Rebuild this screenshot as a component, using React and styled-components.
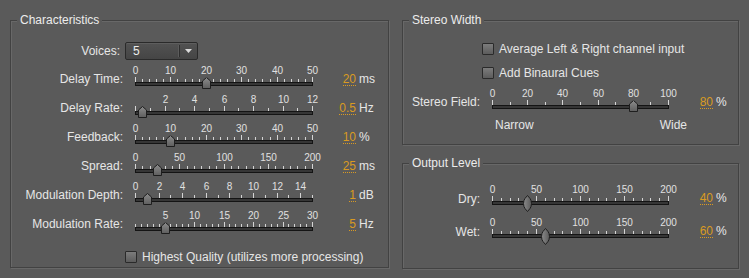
import React from "react";
import styled, { createGlobalStyle } from "styled-components";

const ORANGE = "#d99a22";
const BG = "#5a5a5a";

const GlobalStyle = createGlobalStyle`
  html, body {
    margin: 0;
    background: ${BG};
  }
  body {
    font-family: "Liberation Sans", Arial, sans-serif;
    color: #e6e6e6;
  }
`;

const characteristics = [
	{ label: "Delay Time:", min: 0, max: 50, value: 20, shown: "20", unit: "ms", minor: 2, major: 10, labels: [0, 10, 20, 30, 40, 50] },
	{ label: "Delay Rate:", min: 0, max: 12, value: 0.5, shown: "0.5", unit: "Hz", minor: 1, major: 2, labels: [2, 4, 6, 8, 10, 12] },
	{ label: "Feedback:", min: 0, max: 50, value: 10, shown: "10", unit: "%", minor: 2, major: 10, labels: [0, 10, 20, 30, 40, 50] },
	{ label: "Spread:", min: 0, max: 200, value: 25, shown: "25", unit: "ms", minor: 200 / 24, major: 50, labels: [0, 50, 100, 150, 200] },
	{ label: "Modulation Depth:", min: 0, max: 15, value: 1, shown: "1", unit: "dB", minor: 1, major: 2, labels: [0, 2, 4, 6, 8, 10, 12, 14] },
	{ label: "Modulation Rate:", min: 0, max: 30, value: 5, shown: "5", unit: "Hz", minor: 1, major: 5, labels: [5, 10, 15, 20, 25, 30], zeroMinor: true },
];

const output = [
	{ label: "Dry:", value: 40, gap: 15 },
	{ label: "Wet:", value: 60, gap: 11 },
];

function Slider({ min, max, value, minor, major, labels, width, lozenge, zeroMinor }) {
	const pos = (v) => Math.round(((v - min) / (max - min)) * (width - 1));
	const count = Math.round((max - min) / minor);
	const ticks = [];
	for (let i = 0; i <= count; i++) {
		const v = min + i * minor;
		let isMajor = Math.abs(v / major - Math.round(v / major)) < 1e-6;
		if (v === 0 && zeroMinor) isMajor = false;
		ticks.push({ x: pos(v) + 0.5, isMajor });
	}

	return (
		<SliderBox $w={width}>
			<Scale>
				{labels.map((l) => (
					<ScaleNum key={l} style={{ left: pos(l) }}>
						{l}
					</ScaleNum>
				))}
			</Scale>
			<svg width={width} height="6" style={{ display: "block" }}>
				{ticks.map((t, i) => (
					<line key={i} x1={t.x} x2={t.x} y1={t.isMajor ? 1 : 3} y2={6} stroke="#d4d4d4" strokeWidth="1" />
				))}
			</svg>
			<Track />
			{lozenge ? (
				<Thumb style={{ left: pos(value) - 4, top: 10 }} width="9" height="17" viewBox="0 0 9 17">
					<defs>
						<linearGradient id="lz" x1="0" x2="1" y1="0" y2="0">
							<stop offset="0" stopColor="#8a8a8a" />
							<stop offset="1" stopColor="#5a5a5a" />
						</linearGradient>
					</defs>
					<path d="M4.5 0.5 C6 2.5 8.5 4 8.5 8.5 C8.5 13 6 14.5 4.5 16.5 C3 14.5 0.5 13 0.5 8.5 C0.5 4 3 2.5 4.5 0.5Z" fill="url(#lz)" stroke="#1e1e1e" />
				</Thumb>
			) : (
				<Thumb style={{ left: pos(value) - 4, top: 11 }} width="9" height="12" viewBox="0 0 9 12">
					<defs>
						<linearGradient id="hs" x1="0" x2="0" y1="0" y2="1">
							<stop offset="0" stopColor="#8c8c8c" />
							<stop offset="1" stopColor="#5e5e5e" />
						</linearGradient>
					</defs>
					<path d="M0.5 11.5 V4 L4.5 0.5 L8.5 4 V11.5 Z" fill="url(#hs)" stroke="#1e1e1e" />
				</Thumb>
			)}
		</SliderBox>
	);
}

function Value({ shown, unit }) {
	return (
		<>
			<ValueCell>
				<Num>{shown}</Num>
			</ValueCell>
			<Unit>{unit}</Unit>
		</>
	);
}

export default function App() {
	return (
		<Page>
			<GlobalStyle />
			<Group $w={379} $h={248}>
				<Title>Characteristics</Title>
				<VoicesRow>
					<Label $pad={0}>Voices:</Label>
					<Select>
						<span>5</span>
						<SelectArrow>
							<svg width="7" height="4" viewBox="0 0 7 4">
								<path d="M0 0 H7 L3.5 4 Z" fill="#dcdcdc" />
							</svg>
						</SelectArrow>
					</Select>
				</VoicesRow>
				{characteristics.map((s, i) => (
					<SliderRow key={s.label} $label={124} $track={178} $value={43} $gap={i === 0 ? 6 : 7}>
						<Label>{s.label}</Label>
						<Slider {...s} width={178} />
						<Value shown={s.shown} unit={s.unit} />
					</SliderRow>
				))}
				<CheckRow $indent={114} $gap={18}>
					<Box />
					<span>Highest Quality (utilizes more processing)</span>
				</CheckRow>
			</Group>

			<Column>
				<Group $w={337} $h={125}>
					<Title>Stereo Width</Title>
					<CheckRow $indent={79} $gap={16}>
						<Box />
						<span>Average Left &amp; Right channel input</span>
					</CheckRow>
					<CheckRow $indent={79} $gap={12}>
						<Box />
						<span>Add Binaural Cues</span>
					</CheckRow>
					<SliderRow $label={89} $track={177} $value={44} $gap={10}>
						<Label>Stereo Field:</Label>
						<Slider min={0} max={100} value={80} minor={10} major={20} labels={[0, 20, 40, 60, 80, 100]} width={177} />
						<Value shown="80" unit="%" />
					</SliderRow>
					<Ends>
						<span>Narrow</span>
						<span>Wide</span>
					</Ends>
				</Group>

				<Group $w={337} $h={106}>
					<Title>Output Level</Title>
					{output.map((o) => (
						<SliderRow key={o.label} $label={89} $track={177} $value={44} $gap={o.gap}>
							<Label $top={7}>{o.label}</Label>
							<Slider min={0} max={200} value={o.value} minor={10} major={50} labels={[0, 50, 100, 150, 200]} width={177} lozenge />
							<Value shown={String(o.value)} unit="%" />
						</SliderRow>
					))}
				</Group>
			</Column>
		</Page>
	);
}

const Page = styled.div`
	display: flex;
	align-items: flex-start;
	gap: 13px;
	padding: 20px 0 0 10px;
	height: 278px;
	box-sizing: border-box;
	overflow: hidden;
`;

const Column = styled.div`
	display: flex;
	flex-direction: column;
	gap: 18px;
`;

const Group = styled.section`
	box-sizing: border-box;
	width: ${(p) => p.$w}px;
	height: ${(p) => p.$h}px;
	border: 1px solid #424242;
	box-shadow: inset 1px 1px 0 #686868, 1px 1px 0 #686868;
`;

const Title = styled.h3`
	width: fit-content;
	margin: -8px 0 0 6px;
	padding: 0 3px;
	background: ${BG};
	font-size: 12px;
	font-weight: normal;
	line-height: 14px;
	color: #ececec;
`;

const Label = styled.div`
	text-align: right;
	padding-right: ${(p) => (p.$pad === undefined ? 12 : p.$pad)}px;
	padding-top: ${(p) => (p.$top === undefined ? 6 : p.$top)}px;
	font-size: 12px;
	line-height: 14px;
	white-space: nowrap;
`;

const VoicesRow = styled.div`
	display: grid;
	grid-template-columns: 109px 73px;
	column-gap: 5px;
	align-items: center;
	margin-top: 15px;
	height: 18px;

	${Label} {
		padding-top: 0;
	}
`;

const Select = styled.div`
	box-sizing: border-box;
	height: 18px;
	display: flex;
	align-items: center;
	justify-content: space-between;
	padding-left: 7px;
	border: 1px solid #2a2a2a;
	border-radius: 2px;
	background: linear-gradient(#525252, #454545);
	box-shadow: inset 0 1px 0 #5e5e5e;
	font-size: 12px;
	color: #ececec;
`;

const SelectArrow = styled.div`
	height: 12px;
	width: 17px;
	display: flex;
	align-items: center;
	justify-content: center;
	border-left: 1px solid #2e2e2e;
	box-shadow: -1px 0 0 #5c5c5c;
`;

const SliderRow = styled.div`
	display: grid;
	grid-template-columns: ${(p) => p.$label}px ${(p) => p.$track}px ${(p) => p.$value}px auto;
	align-items: start;
	height: 22px;
	margin-top: ${(p) => p.$gap}px;
`;

const SliderBox = styled.div`
	position: relative;
	width: ${(p) => p.$w}px;
	height: 22px;
`;

const Scale = styled.div`
	position: relative;
	height: 10px;
`;

const ScaleNum = styled.span`
	position: absolute;
	top: 0;
	transform: translateX(-50%);
	margin-left: 0.5px;
	font-size: 10px;
	line-height: 10px;
	color: #e0e0e0;
`;

const Track = styled.div`
	box-sizing: border-box;
	height: 4px;
	border: 1px solid #141414;
	background: #363636;
`;

const Thumb = styled.svg`
	position: absolute;
	display: block;
`;

const ValueCell = styled.div`
	text-align: right;
	padding-top: 7px;
	font-size: 12px;
	line-height: 12px;
`;

const Num = styled.span`
	display: inline-block;
	vertical-align: top;
	font-size: 12px;
	line-height: 12px;
	color: ${ORANGE};
	border-bottom: 1px dotted ${ORANGE};
`;

const Unit = styled.div`
	padding-top: 7px;
	margin-left: 3px;
	font-size: 12px;
	line-height: 12px;
`;

const CheckRow = styled.div`
	display: flex;
	align-items: center;
	gap: 5px;
	height: 12px;
	margin-top: ${(p) => p.$gap}px;
	padding-left: ${(p) => p.$indent}px;
	font-size: 12px;
	white-space: nowrap;
`;

const Box = styled.span`
	box-sizing: border-box;
	width: 12px;
	height: 12px;
	flex: none;
	border: 1px solid #2a2a2a;
	border-radius: 1px;
	background: linear-gradient(#7c7c7c, #5c5c5c);
`;

const Ends = styled.div`
	display: flex;
	justify-content: space-between;
	width: 192px;
	margin: 7px 0 0 92px;
	font-size: 12px;
	line-height: 14px;
`;
